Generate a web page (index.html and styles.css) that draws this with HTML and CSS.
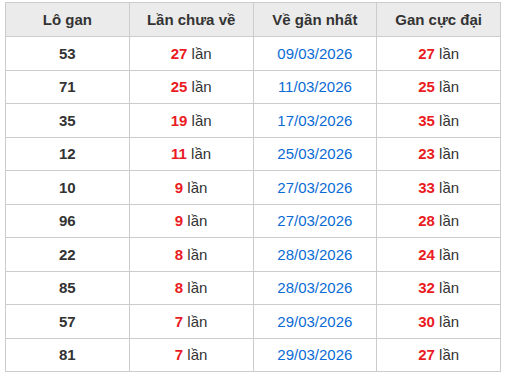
FILE: index.html
```html
<!DOCTYPE html>
<html lang="vi">
<head>
<meta charset="utf-8">
<link rel="stylesheet" href="styles.css">
</head>
<body>
<table class="gan">
  <thead>
    <tr><th>Lô gan</th><th>Lần chưa về</th><th>Về gần nhất</th><th>Gan cực đại</th></tr>
  </thead>
  <tbody>
    <tr><td class="num">53</td><td><b class="red">27</b> lần</td><td class="date">09/03/2026</td><td><b class="red">27</b> lần</td></tr>
    <tr><td class="num">71</td><td><b class="red">25</b> lần</td><td class="date">11/03/2026</td><td><b class="red">25</b> lần</td></tr>
    <tr><td class="num">35</td><td><b class="red">19</b> lần</td><td class="date">17/03/2026</td><td><b class="red">35</b> lần</td></tr>
    <tr><td class="num">12</td><td><b class="red">11</b> lần</td><td class="date">25/03/2026</td><td><b class="red">23</b> lần</td></tr>
    <tr><td class="num">10</td><td><b class="red">9</b> lần</td><td class="date">27/03/2026</td><td><b class="red">33</b> lần</td></tr>
    <tr><td class="num">96</td><td><b class="red">9</b> lần</td><td class="date">27/03/2026</td><td><b class="red">28</b> lần</td></tr>
    <tr><td class="num">22</td><td><b class="red">8</b> lần</td><td class="date">28/03/2026</td><td><b class="red">24</b> lần</td></tr>
    <tr><td class="num">85</td><td><b class="red">8</b> lần</td><td class="date">28/03/2026</td><td><b class="red">32</b> lần</td></tr>
    <tr><td class="num">57</td><td><b class="red">7</b> lần</td><td class="date">29/03/2026</td><td><b class="red">30</b> lần</td></tr>
    <tr><td class="num">81</td><td><b class="red">7</b> lần</td><td class="date">29/03/2026</td><td><b class="red">27</b> lần</td></tr>
  </tbody>
</table>
</body>
</html>
```
FILE: styles.css
```css
html, body {
  margin: 0;
  background: #fff;
}
body {
  padding: 2px 0 0 5px;
  font-family: "Liberation Sans", Arial, sans-serif;
  font-size: 15px;
  color: #333;
}
.gan {
  width: 496px;
  border-collapse: collapse;
  table-layout: fixed;
}
.gan th, .gan td {
  border: 1px solid #ccc;
  text-align: center;
  padding: 0;
}
.gan th {
  background: #ebebeb;
  font-weight: bold;
  height: 33px;
}
.gan td {
  height: 32.5px;
}
.num {
  font-weight: bold;
}
.red {
  color: #ea1b23;
}
.date {
  color: #0b6bd4;
}
```
